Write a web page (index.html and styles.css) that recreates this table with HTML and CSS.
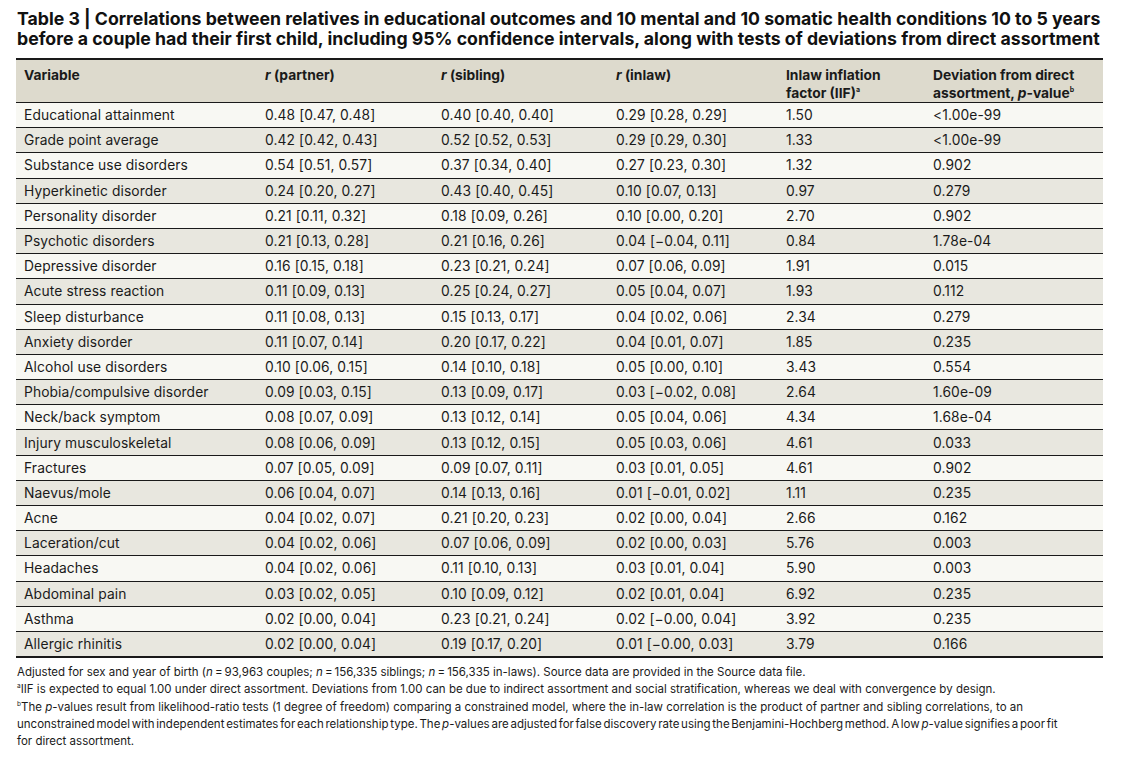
FILE: index.html
```html
<!DOCTYPE html>
<html>
<head>
<meta charset="utf-8">
<link rel="stylesheet" href="styles.css">
</head>
<body>
<div class="page">
<h1 class="title">Table 3 | Correlations between relatives in educational outcomes and 10 mental and 10 somatic health conditions 10 to 5 years before a couple had their first child, including 95% confidence intervals, along with tests of deviations from direct assortment</h1>
<table class="data">
<colgroup>
<col class="c1"><col class="c2"><col class="c3"><col class="c4"><col class="c5"><col class="c6">
</colgroup>
<thead>
<tr><th>Variable</th><th><i>r</i> (partner)</th><th><i>r</i> (sibling)</th><th><i>r</i> (inlaw)</th><th>Inlaw inflation<br>factor (IIF)<sup>a</sup></th><th>Deviation from direct<br>assortment, <i>p</i>-value<sup>b</sup></th></tr>
</thead>
<tbody>
<tr><td>Educational attainment</td><td>0.48 [0.47, 0.48]</td><td>0.40 [0.40, 0.40]</td><td>0.29 [0.28, 0.29]</td><td>1.50</td><td>&lt;1.00e-99</td></tr>
<tr><td>Grade point average</td><td>0.42 [0.42, 0.43]</td><td>0.52 [0.52, 0.53]</td><td>0.29 [0.29, 0.30]</td><td>1.33</td><td>&lt;1.00e-99</td></tr>
<tr><td>Substance use disorders</td><td>0.54 [0.51, 0.57]</td><td>0.37 [0.34, 0.40]</td><td>0.27 [0.23, 0.30]</td><td>1.32</td><td>0.902</td></tr>
<tr><td>Hyperkinetic disorder</td><td>0.24 [0.20, 0.27]</td><td>0.43 [0.40, 0.45]</td><td>0.10 [0.07, 0.13]</td><td>0.97</td><td>0.279</td></tr>
<tr><td>Personality disorder</td><td>0.21 [0.11, 0.32]</td><td>0.18 [0.09, 0.26]</td><td>0.10 [0.00, 0.20]</td><td>2.70</td><td>0.902</td></tr>
<tr><td>Psychotic disorders</td><td>0.21 [0.13, 0.28]</td><td>0.21 [0.16, 0.26]</td><td>0.04 [−0.04, 0.11]</td><td>0.84</td><td>1.78e-04</td></tr>
<tr><td>Depressive disorder</td><td>0.16 [0.15, 0.18]</td><td>0.23 [0.21, 0.24]</td><td>0.07 [0.06, 0.09]</td><td>1.91</td><td>0.015</td></tr>
<tr><td>Acute stress reaction</td><td>0.11 [0.09, 0.13]</td><td>0.25 [0.24, 0.27]</td><td>0.05 [0.04, 0.07]</td><td>1.93</td><td>0.112</td></tr>
<tr><td>Sleep disturbance</td><td>0.11 [0.08, 0.13]</td><td>0.15 [0.13, 0.17]</td><td>0.04 [0.02, 0.06]</td><td>2.34</td><td>0.279</td></tr>
<tr><td>Anxiety disorder</td><td>0.11 [0.07, 0.14]</td><td>0.20 [0.17, 0.22]</td><td>0.04 [0.01, 0.07]</td><td>1.85</td><td>0.235</td></tr>
<tr><td>Alcohol use disorders</td><td>0.10 [0.06, 0.15]</td><td>0.14 [0.10, 0.18]</td><td>0.05 [0.00, 0.10]</td><td>3.43</td><td>0.554</td></tr>
<tr><td>Phobia/compulsive disorder</td><td>0.09 [0.03, 0.15]</td><td>0.13 [0.09, 0.17]</td><td>0.03 [−0.02, 0.08]</td><td>2.64</td><td>1.60e-09</td></tr>
<tr><td>Neck/back symptom</td><td>0.08 [0.07, 0.09]</td><td>0.13 [0.12, 0.14]</td><td>0.05 [0.04, 0.06]</td><td>4.34</td><td>1.68e-04</td></tr>
<tr><td>Injury musculoskeletal</td><td>0.08 [0.06, 0.09]</td><td>0.13 [0.12, 0.15]</td><td>0.05 [0.03, 0.06]</td><td>4.61</td><td>0.033</td></tr>
<tr><td>Fractures</td><td>0.07 [0.05, 0.09]</td><td>0.09 [0.07, 0.11]</td><td>0.03 [0.01, 0.05]</td><td>4.61</td><td>0.902</td></tr>
<tr><td>Naevus/mole</td><td>0.06 [0.04, 0.07]</td><td>0.14 [0.13, 0.16]</td><td>0.01 [−0.01, 0.02]</td><td>1.11</td><td>0.235</td></tr>
<tr><td>Acne</td><td>0.04 [0.02, 0.07]</td><td>0.21 [0.20, 0.23]</td><td>0.02 [0.00, 0.04]</td><td>2.66</td><td>0.162</td></tr>
<tr><td>Laceration/cut</td><td>0.04 [0.02, 0.06]</td><td>0.07 [0.06, 0.09]</td><td>0.02 [0.00, 0.03]</td><td>5.76</td><td>0.003</td></tr>
<tr><td>Headaches</td><td>0.04 [0.02, 0.06]</td><td>0.11 [0.10, 0.13]</td><td>0.03 [0.01, 0.04]</td><td>5.90</td><td>0.003</td></tr>
<tr><td>Abdominal pain</td><td>0.03 [0.02, 0.05]</td><td>0.10 [0.09, 0.12]</td><td>0.02 [0.01, 0.04]</td><td>6.92</td><td>0.235</td></tr>
<tr><td>Asthma</td><td>0.02 [0.00, 0.04]</td><td>0.23 [0.21, 0.24]</td><td>0.02 [−0.00, 0.04]</td><td>3.92</td><td>0.235</td></tr>
<tr><td>Allergic rhinitis</td><td>0.02 [0.00, 0.04]</td><td>0.19 [0.17, 0.20]</td><td>0.01 [−0.00, 0.03]</td><td>3.79</td><td>0.166</td></tr>
</tbody>
</table>
<div class="notes">
<p>Adjusted for sex and year of birth (<i>n</i>&#8201;=&#8201;93,963 couples; <i>n</i>&#8201;=&#8201;156,335 siblings; <i>n</i>&#8201;=&#8201;156,335 in-laws). Source data are provided in the Source data file.</p>
<p><sup>a</sup>IIF is expected to equal 1.00 under direct assortment. Deviations from 1.00 can be due to indirect assortment and social stratification, whereas we deal with convergence by design.</p>
<p><sup>b</sup>The <i>p</i>-values result from likelihood-ratio tests (1 degree of freedom) comparing a constrained model, where the in-law correlation is the product of partner and sibling correlations, to an<br><span class="tight">unconstrained model with independent estimates for each relationship type. The <i>p</i>-values are adjusted for false discovery rate using the Benjamini-Hochberg method. A low <i>p</i>-value signifies a poor fit</span><br>for direct assortment.</p>
</div>
</div>
</body>
</html>
```
FILE: styles.css
```css
html, body {
  margin: 0;
  padding: 0;
  background: #ffffff;
}
body {
  font-family: "Inter", "Liberation Sans", sans-serif;
  color: #1a1a1a;
}
.page {
  width: 1087px;
  padding: 9px 0 0 16px;
}
.title {
  width: 1096px;
  margin: 0 0 9px 1px;
  font-size: 17.7px;
  line-height: 20px;
  font-weight: 700;
  letter-spacing: 0;
  color: #111;
}
.data {
  width: 1087px;
  border-collapse: collapse;
  table-layout: fixed;
  font-size: 13.8px;
  letter-spacing: 0.1px;
  border-top: 2px solid #1a1a1a;
  border-bottom: 2px solid #1a1a1a;
}
.c1 { width: 241px; }
.c2 { width: 176px; }
.c3 { width: 175px; }
.c4 { width: 170px; }
.c5 { width: 147px; }
.c6 { width: 178px; }
.data th {
  background: #dddacd;
  text-align: left;
  vertical-align: top;
  font-weight: 700;
  letter-spacing: 0;
  padding: 6px 8px 0;
  height: 36px;
  line-height: 18px;
  border-bottom: 1px solid #1a1a1a;
}
.data th sup {
  font-size: 7px;
  vertical-align: super;
  line-height: 0;
}
.data td {
  padding: 0 8px;
  height: 24.2px;
  line-height: 24px;
  border-bottom: 1px solid #1a1a1a;
  white-space: nowrap;
}
.data tbody tr:nth-child(odd) td { background: #f8f8f3; }
.data tbody tr:nth-child(even) td { background: #e8e7df; }
.notes {
  margin-top: 6px;
  font-size: 11.5px;
  line-height: 17.3px;
  color: #1a1a1a;
  width: 1090px;
}
.notes p {
  margin: 0 0 0 1px;
}
.notes sup {
  font-size: 6.5px;
  vertical-align: super;
  line-height: 0;
}
.tight {
  word-spacing: -1.5px;
  white-space: nowrap;
}
```
